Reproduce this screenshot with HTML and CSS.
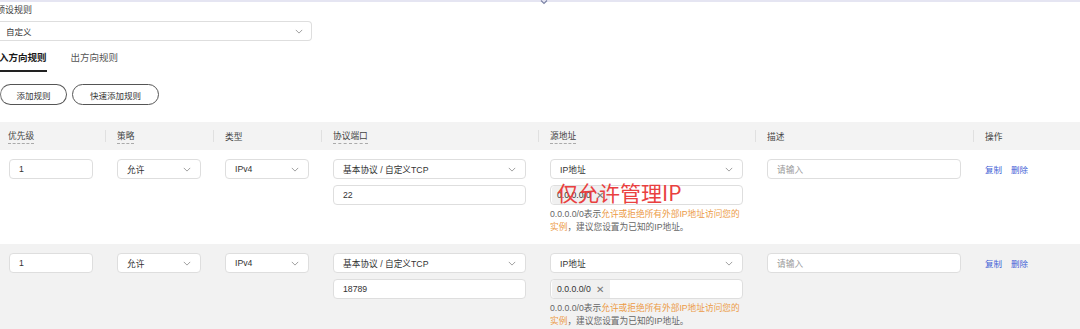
FILE: index.html
```html
<!DOCTYPE html>
<html lang="zh">
<head>
    <meta charset="utf-8">
    <title>安全组规则</title>
    <link rel="stylesheet" href="styles.css">
</head>
<body>
    <div class="topbar">
        <svg class="topbar-icon" width="8" height="5" viewBox="0 0 8 5"><path d="M1 0.5 L4 3.5 L7 0.5" fill="none" stroke="#7c84a6" stroke-width="1.2"/></svg>
    </div>

    <section class="preset">
        <div class="field-label">预设规则</div>
        <div class="select preset-select">
            <span>自定义</span>
            <svg class="chevron" viewBox="0 0 10 6"><path d="M1 1 L5 5 L9 1" /></svg>
        </div>
    </section>

    <nav class="tabs">
        <a class="tab -active">入方向规则</a>
        <a class="tab">出方向规则</a>
    </nav>

    <div class="toolbar">
        <button class="pill-button">添加规则</button>
        <button class="pill-button">快速添加规则</button>
    </div>

    <div class="rules">
        <div class="rules-head">
            <div class="cell"><span class="hint-title">优先级</span></div>
            <div class="cell"><span class="hint-title">策略</span></div>
            <div class="cell">类型</div>
            <div class="cell"><span class="hint-title">协议端口</span></div>
            <div class="cell"><span class="hint-title">源地址</span></div>
            <div class="cell">描述</div>
            <div class="cell">操作</div>
        </div>

        <div class="rule-row">
            <div class="cell"><div class="input">1</div></div>
            <div class="cell">
                <div class="select"><span>允许</span><svg class="chevron" viewBox="0 0 10 6"><path d="M1 1 L5 5 L9 1" /></svg></div>
            </div>
            <div class="cell">
                <div class="select"><span>IPv4</span><svg class="chevron" viewBox="0 0 10 6"><path d="M1 1 L5 5 L9 1" /></svg></div>
            </div>
            <div class="cell stack">
                <div class="select"><span>基本协议 / 自定义TCP</span><svg class="chevron" viewBox="0 0 10 6"><path d="M1 1 L5 5 L9 1" /></svg></div>
                <div class="input">22</div>
            </div>
            <div class="cell stack source">
                <div class="select"><span>IP地址</span><svg class="chevron" viewBox="0 0 10 6"><path d="M1 1 L5 5 L9 1" /></svg></div>
                <div class="input tag-input"><span class="tag">0.0.0.0/0 <span class="tag-close">✕</span></span></div>
                <p class="source-hint">0.0.0.0/0表示<em>允许或拒绝所有外部IP地址访问您的<br>实例</em>，建议您设置为已知的IP地址。</p>
                <div class="annotation">仅允许管理IP</div>
            </div>
            <div class="cell"><div class="input placeholder">请输入</div></div>
            <div class="cell actions"><a>复制</a><a>删除</a></div>
        </div>

        <div class="rule-row -hover">
            <div class="cell"><div class="input">1</div></div>
            <div class="cell">
                <div class="select"><span>允许</span><svg class="chevron" viewBox="0 0 10 6"><path d="M1 1 L5 5 L9 1" /></svg></div>
            </div>
            <div class="cell">
                <div class="select"><span>IPv4</span><svg class="chevron" viewBox="0 0 10 6"><path d="M1 1 L5 5 L9 1" /></svg></div>
            </div>
            <div class="cell stack">
                <div class="select"><span>基本协议 / 自定义TCP</span><svg class="chevron" viewBox="0 0 10 6"><path d="M1 1 L5 5 L9 1" /></svg></div>
                <div class="input">18789</div>
            </div>
            <div class="cell stack source">
                <div class="select"><span>IP地址</span><svg class="chevron" viewBox="0 0 10 6"><path d="M1 1 L5 5 L9 1" /></svg></div>
                <div class="input tag-input"><span class="tag">0.0.0.0/0 <span class="tag-close">✕</span></span></div>
                <p class="source-hint">0.0.0.0/0表示<em>允许或拒绝所有外部IP地址访问您的<br>实例</em>，建议您设置为已知的IP地址。</p>
            </div>
            <div class="cell"><div class="input placeholder">请输入</div></div>
            <div class="cell actions"><a>复制</a><a>删除</a></div>
        </div>
    </div>
</body>
</html>
```

FILE: styles.css
```css
* { box-sizing: border-box; margin: 0; }

body {
    margin: 0;
    font-family: "Liberation Sans", "Noto Sans CJK SC", sans-serif;
    color: #333;
    background: #fff;
    overflow: hidden;
}

.topbar {
    height: 2px;
    background: #e5e5f2;
    padding-left: 540px;
}

.topbar-icon {
    display: block;
}

/* preset */

.preset {
    padding-top: 2px;
}

.field-label {
    font-size: 9px;
    line-height: 12px;
    color: #444;
    margin-left: -4px;
}

.select,
.input {
    display: flex;
    align-items: center;
    height: 20px;
    padding: 0 9px;
    border: 1px solid #dedede;
    border-radius: 4px;
    background: #fff;
    font-size: 8.7px;
    color: #333;
}

.select span {
    flex: 1;
}

.chevron {
    width: 8px;
    height: 5px;
    fill: none;
    stroke: #888;
    stroke-width: 1;
}

.preset-select {
    margin-top: 5px;
    width: 312px;
    padding-left: 6px;
    border-left: none;
    border-radius: 0 4px 4px 0;
    font-size: 8.5px;
}

.preset-select .chevron {
    margin-right: -1px;
}

/* tabs */

.tabs {
    display: flex;
    gap: 24px;
    margin-top: 5px;
}

.tab {
    font-size: 9.5px;
    line-height: 14px;
    padding: 5px 0 5px;
    color: #555;
    border-bottom: 2px solid transparent;
}

.tab.-active {
    color: #191919;
    font-weight: 600;
    border-bottom-color: #222;
    margin-left: -1px;
}

/* toolbar */

.toolbar {
    display: flex;
    gap: 5px;
    margin-top: 12px;
}

.pill-button {
    height: 21px;
    padding: 0 14px;
    border: 1px solid #555;
    border-radius: 11px;
    background: #fff;
    font-family: inherit;
    font-size: 8.5px;
    color: #333;
}

.pill-button:first-child {
    width: 67px;
    border-left-color: #777;
}

.pill-button:last-child {
    width: 87px;
}

/* rules table */

.rules {
    margin-top: 17px;
}

.rules-head,
.rule-row {
    display: grid;
    grid-template-columns: 105px 108px 108px 217px 217px 218px 107px;
}

.rules-head {
    height: 28px;
    background: #f3f3f3;
    font-size: 8.7px;
    color: #444;
}

.rules-head .cell {
    display: flex;
    align-items: center;
    padding-left: 12px;
}

.rules-head .cell:first-child {
    padding-left: 8px;
}

.rules-head .cell + .cell {
    background: linear-gradient(#e0e0e0, #e0e0e0) left center / 1px 12px no-repeat;
}

.hint-title {
    padding-bottom: 1px;
    border-bottom: 1px dashed #aaa;
}

.rule-row {
    padding: 9px 0 9px;
    background: #fff;
}

.rule-row.-hover {
    margin-top: 1px;
    background: #f2f2f2;
}

.rule-row .cell {
    padding: 0 12px;
}

.rule-row .cell:first-child {
    padding-left: 9px;
}

.stack {
    display: flex;
    flex-direction: column;
    gap: 6px;
}

.source {
    position: relative;
}

.placeholder {
    color: #999;
}

.tag-input {
    padding-left: 1px;
}

.tag {
    display: flex;
    align-items: center;
    gap: 5px;
    height: 18px;
    padding: 0 6px 0 5px;
    background: #f0f0f0;
    border-radius: 3px 0 0 3px;
    font-size: 8.7px;
    color: #333;
}

.tag-close {
    font-size: 10px;
    font-weight: 300;
    color: #777;
}

.source-hint {
    margin-top: -3px;
    font-size: 8.7px;
    line-height: 13px;
    color: #666;
    white-space: nowrap;
}

.source-hint em {
    font-style: normal;
    color: #ec9a45;
}

.annotation {
    position: absolute;
    left: 19px;
    top: 19px;
    font-family: "Noto Sans CJK SC", sans-serif;
    font-size: 21px;
    line-height: 28px;
    color: #e9403f;
}

.actions {
    display: flex;
    gap: 9px;
    height: 20px;
    align-items: center;
    font-size: 8.5px;
}

.actions a {
    color: #4462d6;
}
```
